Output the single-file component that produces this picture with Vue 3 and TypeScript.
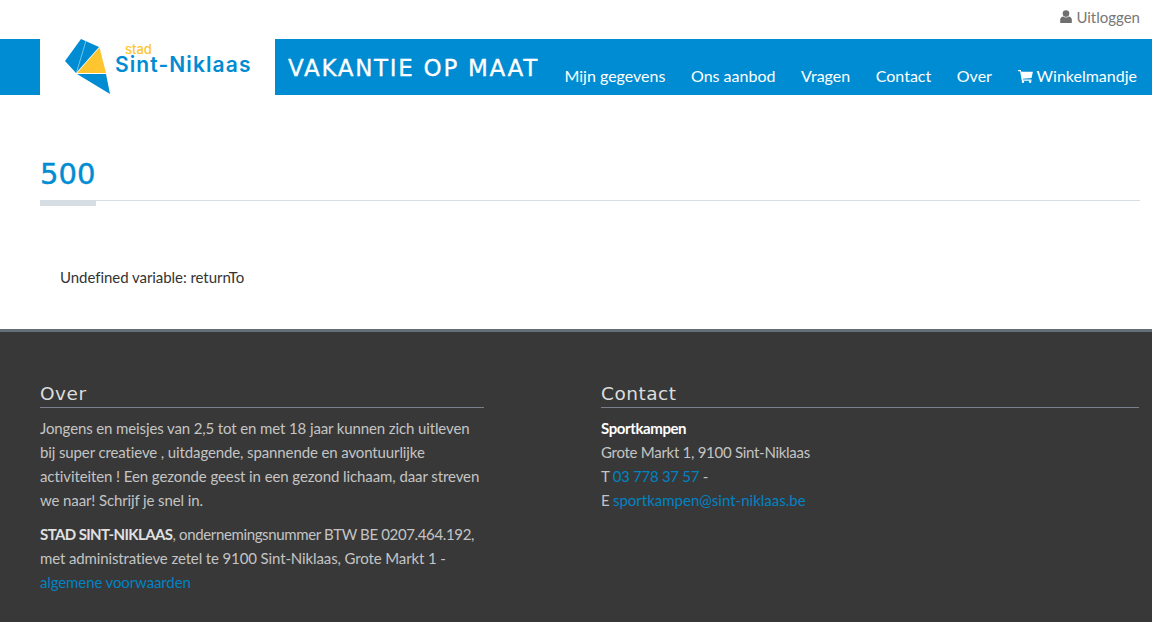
<template>
  <div class="page">
    <div class="topbar">
      <a class="logout">
        <svg class="user-icon" viewBox="0 0 12 13" width="12" height="13">
          <circle cx="6" cy="3.6" r="3.3" fill="#6f6f6f" />
          <path d="M0.2 13V9.6C0.2 7.8 1.6 6.6 3.2 6.4C4 7.1 5 7.4 6 7.4C7 7.4 8 7.1 8.8 6.4C10.4 6.6 11.8 7.8 11.8 9.6V13Z" fill="#6f6f6f" />
        </svg>
        Uitloggen
      </a>
    </div>

    <header class="header">
      <div class="side"></div>
      <div class="logo">
        <svg class="kite" viewBox="0 0 46 56" width="46" height="56">
          <polygon points="16,0 34,8 11,34 0,22" fill="#008cd2" />
          <line x1="21" y1="1.800" x2="11.500" y2="33.500" stroke="#8fd0f0" stroke-width="0.8" />
          <polygon points="34.500,8.500 41,34 12,34" fill="#fdc52f" />
          <polygon points="12,35 41,35 45,55" fill="#008cd2" />
        </svg>
        <div class="logo-text">
          <span class="stad">stad</span>
          <span class="city">Sint-Niklaas</span>
        </div>
      </div>
      <div class="bar">
        <span class="title">VAKANTIE OP MAAT</span>
        <nav class="nav">
          <a v-for="item in navItems" :key="item">{{ item }}</a>
          <a class="cart">
            <svg viewBox="0 0 16 14" width="15" height="13">
              <path d="M0 0H3L3.500 2H16L14.500 8.500L5 9.300L5.300 10.300H14.500V11.500H4L2.200 1.400H0Z" fill="#fff" />
              <circle cx="5.300" cy="12.700" r="1.300" fill="#fff" />
              <circle cx="13" cy="12.700" r="1.300" fill="#fff" />
            </svg>
            Winkelmandje
          </a>
        </nav>
      </div>
    </header>

    <main class="content">
      <h1 class="heading">500</h1>
      <div class="rule"><span></span></div>
      <p class="message">Undefined variable: returnTo</p>
    </main>

    <footer class="footer">
      <section class="col-over">
        <h2>Over</h2>
        <p>
          Jongens en meisjes van 2,5 tot en met 18 jaar kunnen zich uitleven<br />
          bij super creatieve , uitdagende, spannende en avontuurlijke<br />
          <span class="wide">activiteiten ! Een gezonde geest in een gezond lichaam, daar streven</span><br />
          we naar! Schrijf je snel in.
        </p>
        <p class="second">
          <strong>STAD SINT-NIKLAAS</strong><span class="tight">, ondernemingsnummer BTW BE 0207.464.192,</span><br />
          met administratieve zetel te 9100 Sint-Niklaas, Grote Markt 1 -<br />
          <a>algemene voorwaarden</a>
        </p>
      </section>
      <section class="col-contact">
        <h2>Contact</h2>
        <p class="address">
          <strong class="white">Sportkampen</strong><br />
          Grote Markt 1, 9100 Sint-Niklaas<br />
          T <a>03 778 37 57</a> -<br />
          E <a class="mail">sportkampen@sint-niklaas.be</a>
        </p>
      </section>
    </footer>
  </div>
</template>

<script setup lang="ts">
const navItems: string[] = ["Mijn gegevens", "Ons aanbod", "Vragen", "Contact", "Over"];
</script>

<style>
html,
body {
  background: #383838;
}
</style>

<style scoped>
.page {
  font-family: Lato, "Open Sans", sans-serif;
  font-size: 15px;
  line-height: 24px;
  color: #333;
  background: #fff;
  height: 622px;
  overflow: hidden;
}

.topbar {
  height: 39px;
  display: flex;
  justify-content: flex-end;
  align-items: center;
  padding: 0 12px 6px 0;
  box-sizing: border-box;
}

.logout {
  color: #777;
  font-size: 15px;
  display: flex;
  align-items: center;
  gap: 4px;
}

.header {
  height: 56px;
  display: flex;
}

.side {
  width: 40px;
  background: #008cd2;
}

.logo {
  width: 235px;
  background: #fff;
  display: flex;
  padding-left: 25px;
  box-sizing: border-box;
}

.kite {
  flex: none;
}

.logo-text {
  display: flex;
  flex-direction: column;
  margin-left: 4px;
  padding-top: 4px;
}

.stad {
  color: #fdc52f;
  font-family: Inter, sans-serif;
  font-weight: 500;
  font-size: 13px;
  line-height: 13px;
  padding-left: 10px;
}

.city {
  color: #008cd2;
  font-family: Inter, sans-serif;
  font-weight: 600;
  font-size: 21px;
  line-height: 24px;
  letter-spacing: 1.1px;
  margin-top: -3px;
  white-space: nowrap;
}

.bar {
  flex: 1;
  background: #008cd2;
  color: #fff;
  display: flex;
  justify-content: space-between;
  padding: 0 15px 0 13px;
}

.title {
  font-family: "DejaVu Sans", sans-serif;
  font-size: 23px;
  line-height: 59px;
  letter-spacing: 1.7px;
  -webkit-text-stroke: 0.3px #fff;
  white-space: nowrap;
}

.nav {
  display: flex;
  align-items: flex-end;
  gap: 25.6px;
  padding-bottom: 7px;
  font-size: 16px;
  white-space: nowrap;
}

.cart {
  display: flex;
  align-items: center;
  gap: 4px;
}

.content {
  height: 234px;
  padding: 0 12px 0 40px;
  box-sizing: border-box;
}

.heading {
  margin: 0;
  padding-top: 62px;
  color: #008cd2;
  font-family: "DejaVu Sans", sans-serif;
  font-size: 29px;
  font-weight: 400;
  line-height: 34px;
  -webkit-text-stroke: 0.4px #008cd2;
}

.rule {
  margin-top: 9px;
  border-top: 1px solid #d6dde3;
}

.rule span {
  display: block;
  width: 56px;
  height: 5px;
  background: #d6dde3;
}

.message {
  margin: 59px 0 0 20px;
  letter-spacing: -0.05px;
}

.footer {
  height: 293px;
  border-top: 3px solid #666e75;
  background: #383838;
  color: #c4c4c4;
  display: grid;
  grid-template-columns: 444px 538px;
  column-gap: 117px;
  padding: 0 0 0 40px;
  box-sizing: border-box;
}

.footer h2 {
  margin: 49px 0 0;
  padding-bottom: 1px;
  border-bottom: 1px solid #7a808c;
  color: #ddd;
  font-family: "DejaVu Sans", sans-serif;
  font-size: 18.5px;
  font-weight: 400;
  line-height: 25px;
  letter-spacing: 0.5px;
}

.footer p {
  margin: 8px 0 0;
  white-space: nowrap;
  letter-spacing: -0.12px;
}

.footer p.second {
  margin-top: 10px;
}

.footer p.address {
  letter-spacing: -0.28px;
}

.wide {
  letter-spacing: -0.09px;
}

.tight {
  letter-spacing: -0.36px;
}

.footer a {
  color: #0083c4;
}

.footer a.mail {
  letter-spacing: 0;
}

.footer strong {
  font-weight: 700;
  color: #e0e0e0;
  letter-spacing: -0.6px;
}

.footer strong.white {
  color: #fff;
  letter-spacing: -0.4px;
}
</style>
